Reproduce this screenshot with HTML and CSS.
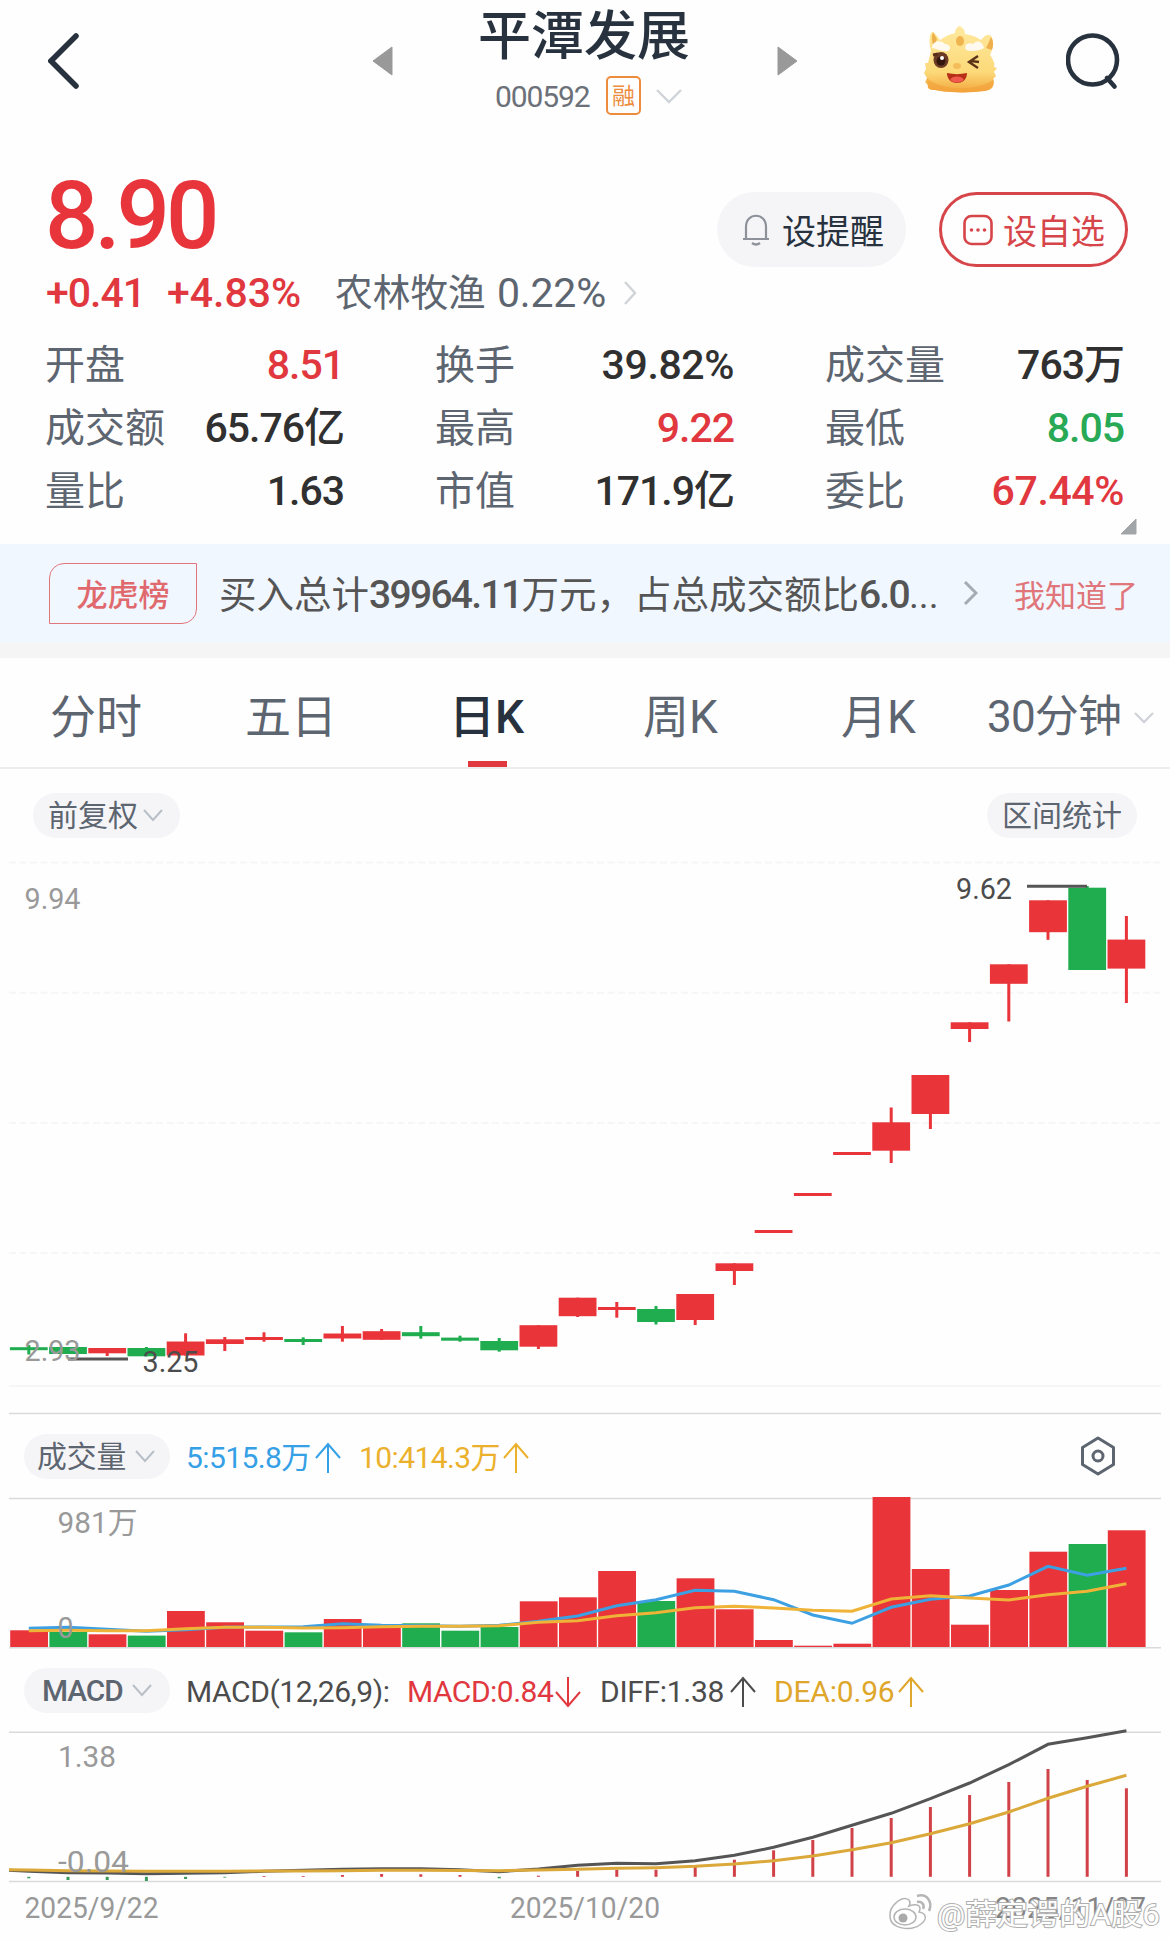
FILE: index.html
```html
<!DOCTYPE html>
<html lang="zh-CN">
<head>
    <meta charset="UTF-8">
    <meta name="viewport" content="width=device-width, initial-scale=1.0">
    <title>平潭发展 000592</title>
    <link rel="stylesheet" href="styles.css">
</head>
<body>
    <header class="topbar">
        <svg class="icon-back" width="32" height="56" viewBox="0 0 32 56"><path d="M28 3 L3 28 L28 53"/></svg>
        <svg class="icon-tri" width="21" height="30" viewBox="0 0 21 30"><path d="M20 1 V29 L1 15 Z"/></svg>
        <div class="stock">
            <h1 class="stock-name">平潭发展</h1>
            <div class="stock-code">
                <span class="code">000592</span>
                <span class="margin-tag">融</span>
                <svg class="chevron" width="28" height="16" viewBox="0 0 28 16"><path d="M2 2 L14 14 L26 2"/></svg>
            </div>
        </div>
        <svg class="icon-tri next" width="21" height="30" viewBox="0 0 21 30"><path d="M1 1 V29 L20 15 Z"/></svg>
        <svg class="mascot" width="74" height="68" viewBox="0 0 74 68">
            <defs>
                <linearGradient id="skin" x1="0" y1="0" x2="0" y2="1">
                    <stop offset="0" stop-color="#ffe9a0"/>
                    <stop offset=".7" stop-color="#fcd978"/>
                    <stop offset="1" stop-color="#f3a63c"/>
                </linearGradient>
            </defs>
            <path d="M8 26 C5 14 7 7 10 7 C13 9 15 12 17 15 C24 10 29 9 32 8 C32 4 35 1 37 1 C40 3 42 5 42 9 C49 10 54 12 58 15 C61 11 65 8 68 11 C72 17 70 23 67 30 C71 36 72 39 71 42 L74 43 L71 47 L73 51 L70 54 L71 58 C70 63 68 65 62 66 C48 68 25 68 12 65 C6 65 4 63 5 60 L2 57 L4 53 L1 48 L3 44 L2 38 L5 38 Z" fill="url(#skin)"/>
            <path d="M10 7 C8 12 9 18 11 21 L14 14 Z M68 12 C66 16 65 20 63 23 L69 25 C71 19 70 15 68 12 Z" fill="#eeb04d"/>
            <path d="M4 53 C15 65 54 68 71 54 C70 63 68 65 60 66 C45 68 25 68 12 65 C5 65 4 61 4 53 Z" fill="#f2a23b" opacity=".65"/>
            <ellipse cx="37" cy="16" rx="4" ry="5" fill="#f0b44f"/>
            <path d="M9 23 C9 16 18 14 22 19 C27 19 29 24 25 26 C20 27 14 24 9 23 Z M43 25 C40 20 46 17 50 19 C54 14 60 17 61 23 C56 26 49 27 43 25 Z" fill="#fffaf0"/>
            <ellipse cx="18" cy="35" rx="7.5" ry="8" fill="#6b3a25"/>
            <path d="M10 30 L15 29" stroke="#5b2d1c" stroke-width="3"/>
            <circle cx="18" cy="36" r="4.5" fill="#32150d"/>
            <circle cx="19" cy="33" r="2" fill="#fff"/>
            <path d="M55 31 L46 37 L55 43 M48 36 L56 37" fill="none" stroke="#5b3418" stroke-width="2.4"/>
            <ellipse cx="34" cy="41" rx="4" ry="3" fill="#f5bc5a"/>
            <path d="M24 48 C31 49.5 37 49.5 44 48 C44 55 39 58 34 58 C28 58 24 54 24 48 Z" fill="#b62f17"/>
            <ellipse cx="34" cy="54.5" rx="6.5" ry="3" fill="#ef5a4c"/>
        </svg>
        <svg class="icon-search" width="56" height="60" viewBox="0 0 56 60"><ellipse cx="26.5" cy="28" rx="24.5" ry="24.5"/><path d="M41 46 L48.5 54.5"/></svg>
    </header>

    <section class="quote">
        <div class="quote-main">
            <div>
                <div class="price">8.90</div>
                <div class="change">
                    <span class="delta">+0.41</span>
                    <span class="percent">+4.83%</span>
                    <span class="sector">农林牧渔</span>
                    <span class="sector-rate">0.22%</span>
                    <svg class="chevron thin" width="14" height="26" viewBox="0 0 14 26"><path d="M2 2 L12 13 L2 24"/></svg>
                </div>
            </div>
            <div class="actions">
                <div class="action">
                    <svg class="icon-bell" width="28" height="32" viewBox="0 0 28 32"><path d="M1 25 H27 M4 25 V13 C4 -2 24 -2 24 13 V25 M10 29 Q14 32 18 29"/></svg>
                    <span>设提醒</span>
                </div>
                <div class="action outlined">
                    <svg class="icon-more" width="30" height="32" viewBox="0 0 30 32"><rect x="1.5" y="2" width="27" height="28" rx="7"/><circle cx="8.5" cy="16" r="1.8"/><circle cx="15" cy="16" r="1.8"/><circle cx="21.5" cy="16" r="1.8"/></svg>
                    <span>设自选</span>
                </div>
            </div>
        </div>

        <div class="stats">
            <div class="stat"><span>开盘</span><b class="red">8.51</b></div>
            <div class="stat"><span>换手</span><b class="wide">39.82%</b></div>
            <div class="stat"><span>成交量</span><b>763万</b></div>
            <div class="stat"><span>成交额</span><b>65.76亿</b></div>
            <div class="stat"><span>最高</span><b class="red">9.22</b></div>
            <div class="stat"><span>最低</span><b class="green">8.05</b></div>
            <div class="stat"><span>量比</span><b>1.63</b></div>
            <div class="stat"><span>市值</span><b>171.9亿</b></div>
            <div class="stat"><span>委比</span><b class="red wide">67.44%</b></div>
        </div>
        <svg class="expand" width="17" height="17" viewBox="0 0 17 17"><path d="M16 1 V16 H1 Z"/></svg>
    </section>

    <section class="notice">
        <span class="notice-tag">龙虎榜</span>
        <span class="notice-text">买入总计<i>39964.11</i>万元，占总成交额比<i>6.0</i>...</span>
        <svg class="chevron notice-arrow" width="15" height="26" viewBox="0 0 15 26"><path d="M2 2 L13 13 L2 24"/></svg>
        <span class="notice-ok">我知道了</span>
    </section>

    <nav class="tabs">
        <span class="tab">分时</span>
        <span class="tab">五日</span>
        <span class="tab active">日K</span>
        <span class="tab">周K</span>
        <span class="tab">月K</span>
        <span class="tab period">30分钟<svg class="chevron" width="20" height="12" viewBox="0 0 20 12"><path d="M1 1 L10 10 L19 1"/></svg></span>
    </nav>

    <main class="charts">
        <div class="tools">
            <span class="pill adjust">前复权<svg class="chevron" width="20" height="13" viewBox="0 0 20 13"><path d="M1 1 L10 11 L19 1"/></svg></span>
            <span class="pill">区间统计</span>
        </div>
        <svg class="chart" id="kline" width="1170" height="564" viewBox="0 850 1170 564"></svg>

        <div class="panel-head">
            <span class="pill select">成交量<svg class="chevron" width="20" height="13" viewBox="0 0 20 13"><path d="M1 1 L10 11 L19 1"/></svg></span>
            <span class="legend blue vol5">5:515.8万<svg class="arrow" width="26" height="32" viewBox="0 0 26 32"><path d="M13 31 V2 M1 16 L13 2 L25 16"/></svg></span>
            <span class="legend gold vol10">10:414.3万<svg class="arrow" width="26" height="32" viewBox="0 0 26 32"><path d="M13 31 V2 M1 16 L13 2 L25 16"/></svg></span>
            <svg class="icon-set" width="36" height="40" viewBox="0 0 36 40"><path d="M18 2 L33.5 11.5 V28.5 L18 38 L2.5 28.5 V11.5 Z"/><circle cx="18" cy="20" r="5"/></svg>
        </div>
        <svg class="chart" id="volume" width="1170" height="150" viewBox="0 1499 1170 150"></svg>

        <div class="panel-head macd-head">
            <span class="pill select macd-pill">MACD<svg class="chevron" width="20" height="13" viewBox="0 0 20 13"><path d="M1 1 L10 11 L19 1"/></svg></span>
            <span class="legend dark macd-args">MACD(12,26,9):</span>
            <span class="legend red macd-val">MACD:0.84<svg class="arrow" width="26" height="32" viewBox="0 0 26 32"><path d="M13 1 V30 M1 16 L13 30 L25 16"/></svg></span>
            <span class="legend dark macd-diff">DIFF:1.38<svg class="arrow" width="26" height="32" viewBox="0 0 26 32"><path d="M13 31 V2 M1 16 L13 2 L25 16"/></svg></span>
            <span class="legend amber macd-dea">DEA:0.96<svg class="arrow" width="26" height="32" viewBox="0 0 26 32"><path d="M13 31 V2 M1 16 L13 2 L25 16"/></svg></span>
        </div>
        <svg class="chart" id="macd" width="1170" height="210" viewBox="0 1732 1170 210"></svg>
    </main>

    <script src="chart.js"></script>
</body>
</html>
```
FILE: styles.css
```css
* {
    box-sizing: border-box;
}
body {
    margin: 0;
    width: 1170px;
    height: 1942px;
    overflow: hidden;
    background: #fefefe;
    color: #2b3440;
    font-family: Roboto, "Noto Sans CJK SC", sans-serif;
}
svg {
    display: block;
    flex: none;
}
.red { color: #e0383e; }
.green { color: #27a955; }
.blue { color: #35a0e6; }
.gold { color: #ebb12c; }
.amber { color: #dfa62c; }
.dark { color: #4c4c4c; }

/* header */
.topbar {
    display: grid;
    grid-template-columns: 324px 106px 212px 233px 143px 56px;
    align-items: start;
    height: 160px;
    padding-left: 48px;
}
.icon-back {
    margin-top: 33px;
    fill: none;
    stroke: #27323e;
    stroke-width: 5.5;
    stroke-linecap: round;
}
.icon-tri {
    margin-top: 46px;
    fill: #999;
    stroke: #999;
    stroke-linejoin: round;
}
.icon-tri.next {
    margin-left: 87px;
}
.stock-name {
    margin: 0;
    height: 72px;
    line-height: 75px;
    font-size: 53px;
    font-weight: 500;
    color: #27323e;
    white-space: nowrap;
}
.stock-code {
    display: flex;
    align-items: center;
    height: 47px;
    padding-left: 17px;
}
.code {
    width: 111px;
    font-size: 30px;
    line-height: 40px;
    padding-top: 2px;
    letter-spacing: -1.1px;
    color: #6b7079;
}
.margin-tag {
    width: 35px;
    height: 39px;
    margin-right: 14px;
    border: 2.5px solid #ec8c3c;
    border-radius: 5px;
    color: #ec8c3c;
    font-size: 23px;
    line-height: 38px;
    text-align: center;
}
.chevron {
    fill: none;
    stroke: #d0d4d8;
    stroke-width: 2.4;
}
.mascot {
    margin-top: 25px;
}
.icon-search {
    margin-top: 32px;
    fill: none;
    stroke: #27323e;
    stroke-width: 4.6;
    stroke-linecap: round;
}

/* quote */
.quote {
    position: relative;
    height: 384px;
    padding: 0 42px 0 46px;
}
.quote-main {
    display: flex;
    justify-content: space-between;
    height: 173px;
}
.price {
    height: 110px;
    margin-left: -1px;
    font-size: 94px;
    line-height: 113px;
    font-weight: 500;
    letter-spacing: -4px;
    color: #e8353b;
}
.change {
    display: flex;
    align-items: center;
    height: 46px;
    font-size: 41px;
    line-height: 47px;
    color: #e0383e;
    font-weight: 500;
    white-space: nowrap;
}
.delta {
    width: 121px;
    letter-spacing: -1px;
}
.percent {
    width: 168px;
    letter-spacing: 0;
}
.sector {
    width: 162px;
    padding-top: 1px;
    font-size: 37.7px;
    font-weight: 400;
    color: #5d6570;
}
.sector-rate {
    width: 126px;
    font-weight: 400;
    letter-spacing: -.2px;
    color: #5d6570;
}
.actions {
    display: flex;
    gap: 33px;
    margin-top: 32px;
}
.action {
    display: flex;
    align-items: center;
    width: 189px;
    height: 75px;
    padding-left: 25px;
    border-radius: 38px;
    background: #f5f5f8;
    font-size: 34px;
    color: #27323e;
    white-space: nowrap;
}
.action span {
    margin-left: 12px;
}
.action.outlined {
    padding-left: 21px;
    border: 3px solid #d64549;
    background: none;
    color: #d64549;
}
.action.outlined span {
    margin-left: 10px;
}
.icon-bell {
    fill: none;
    stroke: #8d9199;
    stroke-width: 2.2;
}
.icon-more rect {
    fill: none;
    stroke: #d64549;
    stroke-width: 2.6;
}
.icon-more circle {
    fill: #d64549;
}
.stats {
    display: grid;
    grid-template-columns: 298px 298px 298px;
    grid-auto-rows: 63.2px;
    column-gap: 92px;
    margin-right: -2px;
}
.stat {
    display: flex;
    justify-content: space-between;
    align-items: center;
    font-size: 40px;
    line-height: 48px;
    color: #5d6570;
    white-space: nowrap;
}
.stat span {
    margin-left: -1px;
    padding-top: 2px;
}
.stat b {
    font-size: 41px;
    font-weight: 500;
    letter-spacing: -1px;
    color: #303030;
}
.stat b.wide { letter-spacing: -.4px; }
.stat b.red { color: #e0383e; }
.stat b.green { color: #27a955; }
.expand {
    position: absolute;
    right: 33px;
    top: 358px;
    fill: #a3a6a8;
    stroke: #a3a6a8;
    stroke-linejoin: round;
}

/* notice */
.notice {
    display: flex;
    align-items: center;
    height: 114px;
    padding-left: 49px;
    border-bottom: 16px solid #f5f5f5;
    background: #f0f7ff;
    white-space: nowrap;
}
.notice-tag {
    width: 148px;
    height: 61px;
    margin-top: 1px;
    border: 1.5px solid #e0757a;
    border-radius: 15px 0 15px 0;
    color: #e0696e;
    font-size: 31px;
    font-weight: 500;
    line-height: 63px;
    text-align: center;
}
.notice-text {
    width: 744px;
    margin-left: 22px;
    padding-top: 4px;
    font-size: 37.5px;
    line-height: 48px;
    color: #555;
}
.notice-text i {
    font-style: normal;
    font-weight: 500;
    font-size: 39px;
    letter-spacing: -1.7px;
}
.notice-arrow {
    margin-right: 36px;
    stroke: #a4abb3;
    stroke-width: 3;
}
.notice-ok {
    font-size: 31px;
    color: #e0757a;
}

/* tabs */
.tabs {
    display: grid;
    grid-template-columns: 195px 201px 197px 198px 146px 190px;
    height: 111px;
    padding-left: 50px;
    border-bottom: 2px solid #ededed;
    font-size: 46px;
    line-height: 119px;
    color: #5d6570;
    white-space: nowrap;
}
.tab {
    height: 109px;
}
.tab.active {
    position: relative;
    padding-left: 3px;
    font-weight: 500;
    color: #27323e;
}
.tab.active::after {
    content: "";
    position: absolute;
    left: 22px;
    bottom: 0;
    width: 39px;
    height: 6px;
    background: #e0383e;
}
.period {
    display: flex;
    align-items: center;
    gap: 13px;
    padding-top: 10px;
    font-size: 44px;
    letter-spacing: -.8px;
}

/* charts */
.tools {
    display: flex;
    justify-content: space-between;
    height: 81px;
    padding: 24px 33px 0 33px;
}
.pill {
    display: flex;
    align-items: center;
    gap: 5px;
    height: 45px;
    padding: 0 15px;
    border-radius: 23px;
    background: #f5f5f8;
    font-size: 30px;
    line-height: 47px;
    color: #5d6570;
    white-space: nowrap;
}
.pill.adjust {
    padding-right: 17px;
}
.pill .chevron {
    stroke: #b9bfc6;
    stroke-width: 2;
}
.chart {
    overflow: visible;
}
.panel-head {
    display: flex;
    align-items: center;
    height: 85px;
    padding: 0 54px 0 24px;
}
.macd-head {
    height: 83px;
}
.pill.select {
    width: 146px;
    padding: 0 0 0 13px;
    gap: 9px;
    margin-right: 16px;
    font-size: 29.8px;
}
.pill.macd-pill {
    padding-left: 18px;
    font-weight: 500;
    letter-spacing: -1px;
}
.legend {
    display: flex;
    align-items: center;
    gap: 4px;
    font-size: 30px;
    line-height: 40px;
    white-space: nowrap;
    letter-spacing: -.6px;
}
.panel-head .legend { padding-top: 2px; }
.arrow {
    fill: none;
    stroke: currentColor;
    stroke-width: 2;
}
.vol5 { width: 173px; }
.vol10 { width: 170px; }
.vol10.legend { gap: 3px; }
.macd-args { width: 221px; }
.macd-head .macd-args { letter-spacing: -.4px; }
.macd-val { width: 193px; }
.macd-diff { width: 174px; }
.macd-head .macd-val {
    gap: 2px;
    letter-spacing: -.5px;
}
.macd-head .macd-diff {
    gap: 6px;
    letter-spacing: -.3px;
}
.macd-head .macd-dea { letter-spacing: -.2px; }
.icon-set {
    margin: -2px 0 0 auto;
    fill: none;
    stroke: #5d6570;
    stroke-width: 3;
    stroke-linejoin: round;
}
.chart text {
    font-size: 30px;
    fill: #999;
}
.chart .mark {
    fill: #4c4c4c;
}
.chart .last {
    fill: #858585;
}
.chart .up { fill: #e9343a; }
.chart .down { fill: #20ad50; }
.chart .hist-up { fill: #d04248; }
.chart .hist-down { fill: #3b9a5a; }
.chart .rule { stroke: #dadada; stroke-width: 1.6; }
.chart .faint { stroke: #f6f6f6; stroke-width: 2; }
.chart .dashed { stroke-dasharray: 7 3.5; }
.chart .pointer { stroke: #555; stroke-width: 3; }
.chart .line { fill: none; stroke-width: 3; }
.chart .ma5 { stroke: #3ca0e2; }
.chart .ma10 { stroke: #efb337; }
.chart .diff { stroke: #555; }
.chart .dea { stroke: #dba83a; }
.chart .watermark text {
    font-size: 29px;
    fill: #fff;
    stroke: #b0b0b0;
    stroke-width: 2;
    paint-order: stroke;
}
.chart .watermark path,
.chart .watermark ellipse {
    fill: #fff;
    stroke: #b5b5b5;
    stroke-width: 1.5;
}
.chart .watermark .wave {
    fill: none;
    stroke-width: 2.5;
}
.chart .watermark .pupil {
    fill: #aaa;
}
```
FILE: chart.js
```js
const STEP = 39.2;
const FIRST = 28.8;
const LEFT = 9;
const RIGHT = 1161;

// [up/down, body top, body bottom, wick top, wick bottom]
const candles = [
    ['d', 1347.2, 1350.2, 1345, 1354.5],
    ['d', 1347, 1354, 1347, 1354],
    ['u', 1348, 1353.3, 1348, 1356],
    ['d', 1348, 1356.3, 1347, 1356.3],
    ['u', 1341.5, 1355.5, 1333.3, 1355.5],
    ['u', 1339.3, 1344, 1337, 1351],
    ['u', 1337, 1340, 1332.3, 1341.7],
    ['d', 1339, 1342, 1337.3, 1345],
    ['u', 1333.5, 1338.5, 1326, 1341.7],
    ['u', 1331.2, 1339.8, 1329, 1339.8],
    ['d', 1332.2, 1336.2, 1326, 1338.7],
    ['d', 1337.6, 1340.7, 1335.7, 1341.7],
    ['d', 1341, 1350.3, 1338, 1351.7],
    ['u', 1325.2, 1346.7, 1325.2, 1349],
    ['u', 1297.7, 1316.2, 1297.7, 1317],
    ['u', 1307, 1310, 1302, 1317.7],
    ['d', 1309, 1322, 1306, 1324.5],
    ['u', 1294, 1320, 1294, 1325],
    ['u', 1263.3, 1271, 1263.3, 1285],
    ['u', 1230, 1233, 1230, 1233],
    ['u', 1193, 1196, 1193, 1196],
    ['u', 1152, 1155, 1152, 1155],
    ['u', 1122.3, 1150.7, 1107.5, 1163],
    ['u', 1075, 1114, 1075, 1129],
    ['u', 1022.3, 1029, 1022.3, 1042],
    ['u', 964.3, 983.8, 964.3, 1021.5],
    ['u', 900.3, 932.2, 900.3, 939.8],
    ['d', 887.7, 970, 886, 970],
    ['u', 939.6, 968.6, 916, 1003]
];
const volumeDown = [1, 3, 7, 10, 11, 12, 16, 27];
const volumeTop = [1630.3, 1632, 1634.3, 1635.6, 1611, 1622.3, 1630.7, 1632.3, 1619, 1626.7, 1623.3, 1630.7, 1627, 1601.3, 1597.3, 1571, 1601, 1578.3, 1609.3, 1640, 1645.7, 1643.7, 1497, 1569, 1624.7, 1590, 1551.7, 1544, 1530.3];
const ma5 = [1628.3, 1627.3, 1629.3, 1631.3, 1629.7, 1627.3, 1627, 1626.7, 1623.7, 1625.3, 1625.7, 1626.3, 1625.3, 1621.3, 1616, 1605.7, 1599.7, 1590.3, 1591.3, 1599.7, 1615, 1623.3, 1607.3, 1599.3, 1596, 1585, 1566.3, 1575.3, 1568.3];
const ma10 = [1630.7, 1630.3, 1630.7, 1630.7, 1628.7, 1627.3, 1627.3, 1628, 1627.7, 1626.7, 1626.3, 1626.3, 1625.7, 1622.3, 1620.7, 1615.7, 1612.7, 1607.7, 1606.3, 1608, 1610.3, 1611.3, 1599, 1595.7, 1598, 1600, 1594.7, 1591.3, 1583.7];
const hist = [1878.3, 1880, 1880, 1881, 1879, 1877.6, 1876, 1876, 1875, 1874, 1874.3, 1875, 1878.3, 1875.7, 1871, 1869.7, 1869.7, 1867, 1859.7, 1850.3, 1840, 1828, 1818, 1807, 1795, 1782, 1769, 1780, 1788.3];
const diff = [1871.3, 1872.7, 1873, 1873.7, 1873.3, 1872.7, 1871.3, 1870.3, 1869.3, 1868.7, 1868.7, 1869.7, 1871.7, 1869, 1865.3, 1863.3, 1863.7, 1860.7, 1855.3, 1847.3, 1837.3, 1825.3, 1813.3, 1798.7, 1783, 1764.7, 1744.3, 1737.7, 1730.7];
const dea = [1870, 1870.7, 1871, 1871.3, 1871.3, 1871.3, 1871, 1871, 1870.7, 1870.3, 1870.3, 1870.5, 1870.7, 1870, 1869.3, 1868.3, 1867.7, 1866.3, 1864, 1860.7, 1856, 1849.7, 1842.7, 1833.7, 1823.7, 1812, 1798.3, 1786.3, 1775.3];

const cx = i => FIRST + i * STEP;
const rect = (x, y, w, h, cls) => `<rect class="${cls}" x="${x.toFixed(1)}" y="${y}" width="${w}" height="${h.toFixed(1)}"/>`;
const rule = (y, cls, x1 = LEFT, x2 = RIGHT) => `<line class="${cls}" x1="${x1}" x2="${x2}" y1="${y}" y2="${y}"/>`;
const label = (x, y, w, text, cls = '') => `<text class="${cls}" x="${x}" y="${y}" textLength="${w}" lengthAdjust="spacingAndGlyphs">${text}</text>`;
const line = (values, cls, start = '') => `<polyline class="line ${cls}" points="${start} ${values.map((v, i) => cx(i).toFixed(1) + ',' + v).join(' ')}"/>`;

// candlesticks
let k = '';
[862.5, 992.7, 1123, 1253].forEach(y => k += rule(y, 'faint dashed'));
k += rule(1386, 'faint') + rule(1413.5, 'rule');
candles.forEach(([dir, top, bottom, high, low], i) => {
    const cls = dir === 'u' ? 'up' : 'down';
    k += rect(cx(i) - 18.9, top, 37.8, bottom - top, cls);
    k += rect(cx(i) - 1.5, high, 3, low - high, cls);
});
k += rule(886.2, 'pointer', 1027, 1087) + rule(1359, 'pointer', 68, 128);
k += label(956, 899, 56, '9.62', 'mark') + label(142.5, 1372, 56, '3.25', 'mark');
k += label(24.5, 909, 56, '9.94') + label(24.5, 1361, 56, '2.93');
document.getElementById('kline').innerHTML = k;

// volume
let v = rule(1498.5, 'rule') + rule(1647.7, 'rule');
volumeTop.forEach((top, i) => {
    v += rect(cx(i) - 18.6, top, 37.8, 1647 - top, volumeDown.includes(i) ? 'down' : 'up');
});
v += line(ma5, 'ma5') + line(ma10, 'ma10');
v += label(57.5, 1533, 80, '981万') + label(57.5, 1638, 16, '0');
document.getElementById('volume').innerHTML = v;

// macd
const ZERO = 1876.8;
let m = rule(1732.3, 'rule') + rule(1881.5, 'rule');
hist.forEach((y, i) => {
    m += rect(cx(i) - 1.5, Math.min(y, ZERO), 3, Math.abs(ZERO - y), y < ZERO ? 'hist-up' : 'hist-down');
});
m += line(diff, 'diff', '9,1870.3') + line(dea, 'dea', '9,1869.7');
m += label(58, 1766.5, 58, '1.38') + label(58, 1872, 71, '-0.04');
m += label(24.5, 1918, 134, '2025/9/22') + label(510, 1918, 150, '2025/10/20') + label(995, 1918, 151, '2025/11/07', 'last');
m += `<g class="watermark">
    <path d="M890 1916 C889 1906 902 1895 909 1900 C911 1903 909 1906 909 1906 C918 1903 922 1906 919 1912 C926 1913 928 1919 921 1924 C911 1932 890 1929 890 1916 Z"/>
    <ellipse cx="905" cy="1917" rx="11" ry="8"/>
    <circle class="pupil" cx="903" cy="1918" r="4.5"/>
    <path class="wave" d="M917 1896 C927 1893 933 1902 929 1911 M917 1902 C922 1901 925 1905 923 1909"/>
    <text x="937" y="1925" textLength="223" lengthAdjust="spacingAndGlyphs">@薛定谔的A股6</text>
</g>`;
document.getElementById('macd').innerHTML = m;
```
